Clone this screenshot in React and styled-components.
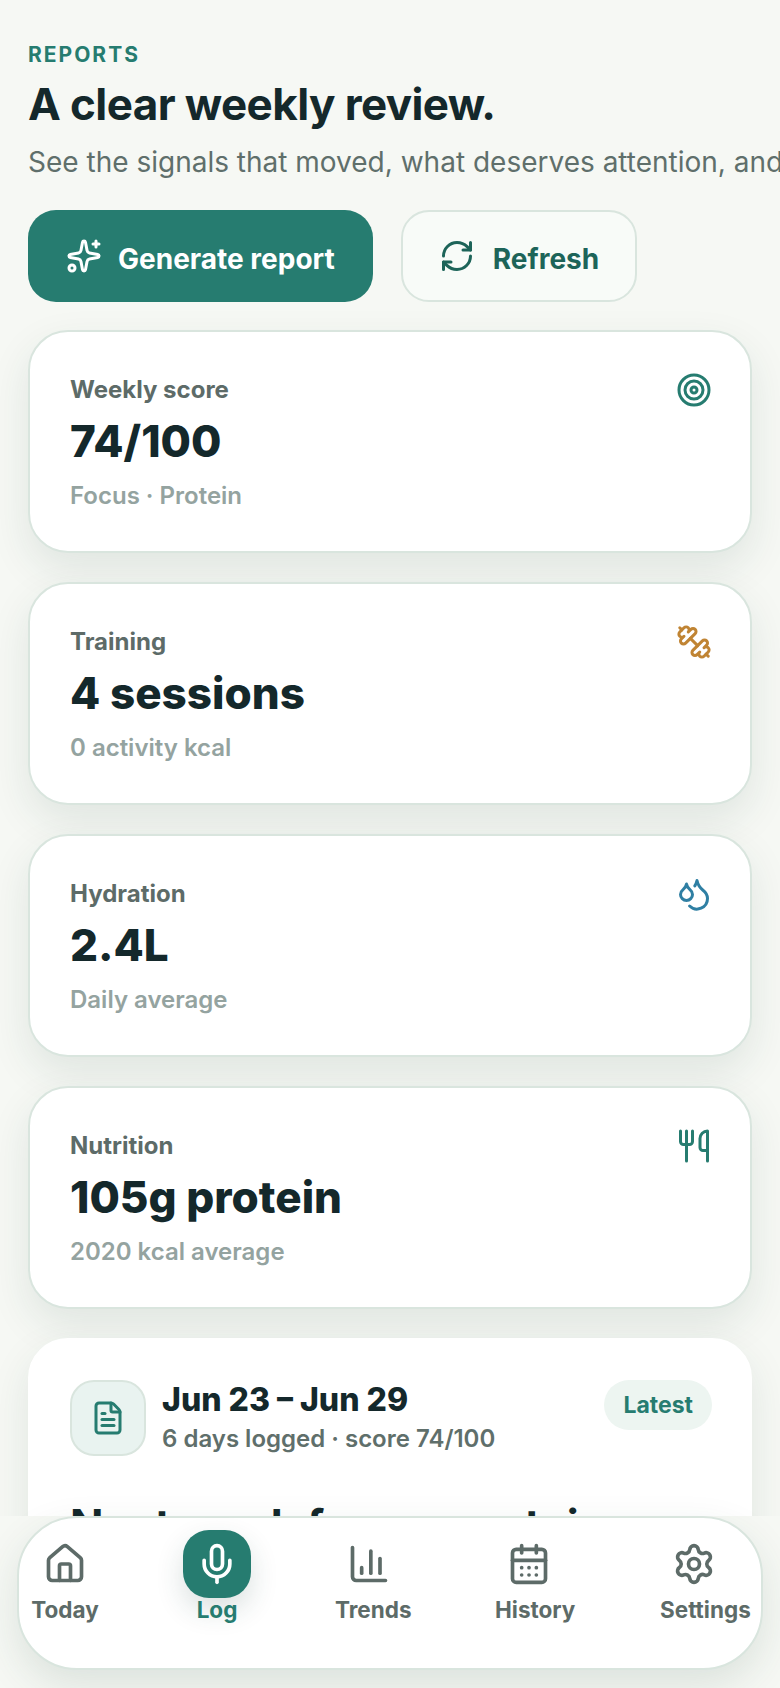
import React from 'react'
import styled, { createGlobalStyle } from 'styled-components'
import {
  CalendarDays,
  ChartColumn,
  Droplets,
  Dumbbell,
  FileText,
  House,
  Mic,
  RefreshCw,
  Settings,
  Sparkles,
  Target,
  Utensils,
} from 'lucide-react'

const GlobalStyle = createGlobalStyle`
  * { box-sizing: border-box; }
  html, body {
    margin: 0;
    height: 100%;
    background: #f6f8f4;
    font-family: Inter, "Liberation Sans", sans-serif;
  }
`

const Screen = styled.div`
  width: 780px;
  height: 1688px;
  display: flex;
  flex-direction: column;
  overflow: hidden;
`
const Main = styled.main`
  flex: 1;
  min-height: 0;
  overflow: hidden;
  padding: 42px 28px 0;
`
const Eyebrow = styled.div`
  font-size: 21px;
  line-height: 24px;
  font-weight: 700;
  letter-spacing: 2px;
  margin-top: 1px;
  color: #267c70;
`
const Title = styled.h1`
  margin: 10px 0 0;
  font-size: 44px;
  line-height: 54px;
  font-weight: 700;
  letter-spacing: -0.6px;
  color: #14282b;
`
const Subtitle = styled.p`
  margin: 11px 0 0;
  font-size: 28px;
  line-height: 40px;
  color: #5f6f6b;
  white-space: nowrap;
`
const Actions = styled.div`
  display: flex;
  gap: 28px;
  margin-top: 28px;
`
const Button = styled.button`
  height: 92px;
  display: flex;
  align-items: center;
  gap: ${p => (p.$primary ? '16px' : '18px')};
  padding: 0 ${p => (p.$primary ? '38px' : '36px')};
  border-radius: 28px;
  border: ${p => (p.$primary ? 'none' : '2px solid #d9e5de')};
  background: ${p => (p.$primary ? '#267c70' : '#f8fbf8')};
  color: ${p => (p.$primary ? '#fff' : '#1d6459')};
  font-family: inherit;
  font-size: 28px;
  font-weight: 700;
`
const ButtonLabel = styled.span`
  padding-top: 6px;
`
const Cards = styled.div`
  display: flex;
  flex-direction: column;
  gap: 29px;
  margin-top: 28px;
`
const Card = styled.section`
  height: ${p => p.$height || '223px'};
  padding: 40px 38px 40px 40px;
  background: #fff;
  border: 2px solid ${p => (p.$flat ? '#fff' : '#d9e5de')};
  border-radius: 40px;
  box-shadow: 0 16px 40px rgba(30, 70, 60, 0.1);
`
const StatHead = styled.div`
  display: flex;
  justify-content: space-between;
  align-items: flex-start;
  height: 36px;
  color: ${p => p.$tone};
`
const StatLabel = styled.div`
  font-size: 24px;
  line-height: 36px;
  font-weight: 700;
  color: #5d6b68;
`
const StatValue = styled.div`
  margin-top: 5px;
  font-size: 44px;
  line-height: 56px;
  font-weight: 800;
  color: #14282b;
`
const StatNote = styled.div`
  margin-top: 11px;
  font-size: 24px;
  line-height: 32px;
  font-weight: 600;
  color: #94a3a0;
`
const ReportHead = styled.div`
  display: flex;
  align-items: flex-start;
  gap: 16px;
`
const Tile = styled.div`
  width: 76px;
  height: 76px;
  flex: none;
  display: flex;
  align-items: center;
  justify-content: center;
  border-radius: 24px;
  background: #e9f3f0;
  border: 2px solid #d9e5de;
  color: #267c70;
`
const ReportText = styled.div`
  flex: 1;
`
const ReportTitle = styled.div`
  font-size: 32px;
  line-height: 40px;
  font-weight: 800;
  color: #14282b;
`
const ReportMeta = styled.div`
  margin-top: 3px;
  font-size: 24px;
  line-height: 32px;
  font-weight: 600;
  color: #5f6f6b;
`
const Pill = styled.div`
  height: 50px;
  padding: 0 19px;
  display: flex;
  align-items: center;
  border-radius: 25px;
  background: #edf5f1;
  color: #267c70;
  font-size: 23px;
  font-weight: 700;
`
const Headline = styled.h2`
  margin: 42px 0 0;
  font-size: 44px;
  line-height: 54px;
  font-weight: 700;
  color: #14282b;
`
const Nav = styled.nav`
  flex: none;
  height: 154px;
  margin: 0 17px 18px 17px;
  padding: 12px 0 0 12px;
  display: grid;
  grid-template-columns: 152px 152px 160px 165px 1fr;
  align-items: start;
  background: #fff;
  border: 2px solid #d9e5de;
  border-radius: 60px;
  box-shadow: 0 16px 40px rgba(30, 70, 60, 0.12);
`
const NavItem = styled.div`
  width: 68px;
  text-align: center;
  white-space: nowrap;
  font-size: 22.5px;
  line-height: 24px;
  font-weight: 700;
  color: ${p => (p.$active ? '#267c70' : '#5d6b68')};
`
const NavIcon = styled.div`
  width: 68px;
  height: 68px;
  display: flex;
  align-items: center;
  justify-content: center;
  border-radius: 26px;
  background: ${p => (p.$active ? '#267c70' : 'transparent')};
  color: ${p => (p.$active ? '#fff' : '#5d6b68')};
  box-shadow: ${p => (p.$active ? '0 12px 28px rgba(30, 70, 60, 0.16)' : 'none')};
`
const MirroredDumbbell = styled(Dumbbell)`
  transform: scaleX(-1);
`

const stats = [
  { label: 'Weekly score', value: '74/100', note: 'Focus · Protein', Icon: Target, tone: '#267c70' },
  { label: 'Training', value: '4 sessions', note: '0 activity kcal', Icon: MirroredDumbbell, tone: '#c08433' },
  { label: 'Hydration', value: '2.4L', note: 'Daily average', Icon: Droplets, tone: '#2f7fa3' },
  { label: 'Nutrition', value: '105g protein', note: '2020 kcal average', Icon: Utensils, tone: '#267c70' },
]

const tabs = [
  { label: 'Today', Icon: House },
  { label: 'Log', Icon: Mic, active: true },
  { label: 'Trends', Icon: ChartColumn },
  { label: 'History', Icon: CalendarDays },
  { label: 'Settings', Icon: Settings },
]

function App() {
  return (
    <Screen>
      <GlobalStyle />
      <Main>
        <Eyebrow>REPORTS</Eyebrow>
        <Title>A clear weekly review.</Title>
        <Subtitle>See the signals that moved, what deserves attention, and what to do next.</Subtitle>
        <Actions>
          <Button $primary><Sparkles size={36} /><ButtonLabel>Generate report</ButtonLabel></Button>
          <Button><RefreshCw size={36} /><ButtonLabel>Refresh</ButtonLabel></Button>
        </Actions>
        <Cards>
          {stats.map(({ label, value, note, Icon, tone }) => (
            <Card key={label}>
              <StatHead $tone={tone}>
                <StatLabel>{label}</StatLabel>
                <Icon size={36} />
              </StatHead>
              <StatValue>{value}</StatValue>
              <StatNote>{note}</StatNote>
            </Card>
          ))}
          <Card $flat $height="400px">
            <ReportHead>
              <Tile><FileText size={36} /></Tile>
              <ReportText>
                <ReportTitle>Jun 23 – Jun 29</ReportTitle>
                <ReportMeta>6 days logged · score 74/100</ReportMeta>
              </ReportText>
              <Pill>Latest</Pill>
            </ReportHead>
            <Headline>Next week focus: protein</Headline>
          </Card>
        </Cards>
      </Main>
      <Nav>
        {tabs.map(({ label, Icon, active }) => (
          <NavItem key={label} $active={active}>
            <NavIcon $active={active}><Icon size={44} /></NavIcon>
            {label}
          </NavItem>
        ))}
      </Nav>
    </Screen>
  )
}

export default App
